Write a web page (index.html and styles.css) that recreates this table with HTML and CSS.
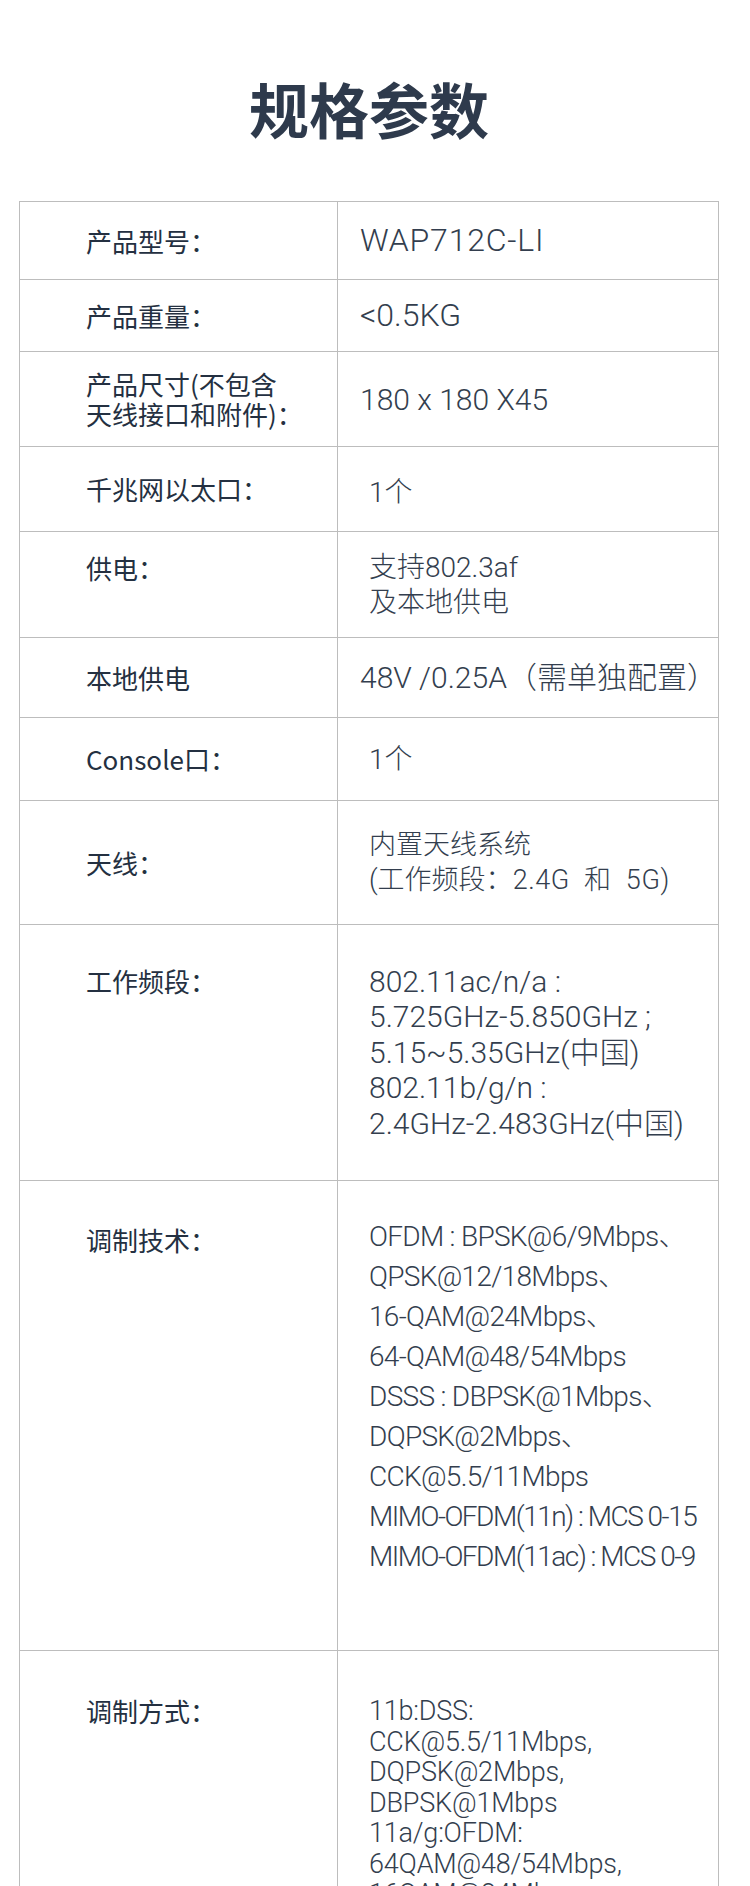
FILE: index.html
```html
<!doctype html>
<html lang="zh-CN">
<head>
  <meta charset="utf-8" />
  <meta name="viewport" content="width=device-width,initial-scale=1" />
  <title>规格参数</title>
  <link rel="stylesheet" href="styles.css">
</head>
<body>
  <div class="page">
    <h1 class="title">规格参数</h1>

    <table class="spec">
      <tr class="row-model">
        <td class="label">产品型号：</td>
        <td class="value tight model">WAP712C-LI</td>
      </tr>
      <tr class="row-weight">
        <td class="label">产品重量：</td>
        <td class="value tight big">&lt;0.5KG</td>
      </tr>
      <tr class="row-size">
        <td class="label">产品尺寸(不包含<br>天线接口和附件)：</td>
        <td class="value tight size">180 x 180 X45</td>
      </tr>
      <tr class="row-eth">
        <td class="label">千兆网以太口：</td>
        <td class="value nudge">1个</td>
      </tr>
      <tr class="row-power top">
        <td class="label">供电：</td>
        <td class="value">支持802.3af<br>及本地供电</td>
      </tr>
      <tr class="row-local">
        <td class="label">本地供电</td>
        <td class="value tight local">48V /0.25A（需单独配置）</td>
      </tr>
      <tr class="row-console">
        <td class="label">Console口：</td>
        <td class="value">1个</td>
      </tr>
      <tr class="row-antenna">
        <td class="label">天线：</td>
        <td class="value cjk">内置天线系统<br>(工作频段：<span class="spread">2.4G 和 5G</span>)</td>
      </tr>
      <tr class="row-band top">
        <td class="label">工作频段：</td>
        <td class="value band">802.11ac/n/a :<br>5.725GHz-5.850GHz ;<br>5.15~5.35GHz(中国)<br>802.11b/g/n :<br>2.4GHz-2.483GHz(中国)</td>
      </tr>
      <tr class="row-tech top">
        <td class="label">调制技术：</td>
        <td class="value tech">OFDM : BPSK@6/9Mbps、<br>QPSK@12/18Mbps、<br>16-QAM@24Mbps、<br>64-QAM@48/54Mbps<br>DSSS : DBPSK@1Mbps、<br>DQPSK@2Mbps、<br>CCK@5.5/11Mbps<br><span class="squeeze">MIMO-OFDM(11n) : MCS 0-15</span><br><span class="squeeze">MIMO-OFDM(11ac) : MCS 0-9</span></td>
      </tr>
      <tr class="row-mode top">
        <td class="label">调制方式：</td>
        <td class="value mode">11b:DSS:<br>CCK@5.5/11Mbps,<br>DQPSK@2Mbps,<br>DBPSK@1Mbps<br>11a/g:OFDM:<br>64QAM@48/54Mbps,<br>16QAM@24Mbps,<br>QPSK@12/18Mbps,<br>BPSK@6/9Mbps</td>
      </tr>
    </table>
  </div>
</body>
</html>
```

FILE: styles.css
```css
*{ box-sizing:border-box }
body{
  margin:0;
  background:#fff;
  font-family:"Noto Sans CJK SC", sans-serif;
  color:#2c3848;
}

.page{
  width:700px;
  margin-left:19px;
  padding-bottom:60px;
}

.title{
  margin:0;
  padding-top:78px;
  font-size:60px;
  line-height:60px;
  font-weight:700;
  text-align:center;
  color:#2e3a4c;
}

/* spec table */
.spec{
  width:700px;
  margin-top:63px;
  border-collapse:collapse;
}
.spec td{
  border:1px solid #bdbdbd;
  padding:0;
  vertical-align:middle;
}
.spec .label{
  width:318px;
  padding-left:66px;
  font-size:26px;
  line-height:30px;
  font-weight:400;
  color:#243041;
}
.spec .value{
  padding-left:31px;
  font-family:Roboto, "Noto Sans CJK SC", sans-serif;
  font-weight:300;
  font-size:28px;
  line-height:35px;
  color:#333e4e;
  white-space:nowrap;
}
.spec .value.tight{ padding-left:22px; }
.spec .value.nudge{ padding-top:6px; }

.model{ font-size:32px !important; letter-spacing:.8px; }
.big{ font-size:32px !important; }
.size{ font-size:30px !important; }
.local{ font-size:30px !important; }
.cjk{ font-size:27px !important; }
.spread{ word-spacing:7px; letter-spacing:.6px; }

/* row heights */
.row-model{ height:78px; }
.row-weight{ height:72px; }
.row-size{ height:95px; }
.row-eth{ height:85px; }
.row-power{ height:106px; }
.row-local{ height:80px; }
.row-console{ height:83px; }
.row-antenna{ height:124px; }
.row-band{ height:256px; }
.row-tech{ height:470px; }
.row-mode{ height:420px; }

/* rows where the label sits on the first line of the value */
.top .label{ vertical-align:top; }
.row-power .label{ padding-top:21px; }
.row-band .label{ padding-top:41px; }
.row-band .value{ font-size:30px; line-height:35.5px; }

.row-tech td{ vertical-align:top; }
.row-tech .label{ padding-top:44px; }
.row-tech .value{
  padding-top:36px;
  font-size:28px;
  line-height:40px;
  letter-spacing:-.7px;
}
.row-tech .squeeze{ letter-spacing:-1.5px; }

.row-mode td{ vertical-align:top; }
.row-mode .label{ padding-top:45px; }
.row-mode .value{
  padding-top:45px;
  font-size:27px;
  line-height:30.5px;
  letter-spacing:-.2px;
}
```
